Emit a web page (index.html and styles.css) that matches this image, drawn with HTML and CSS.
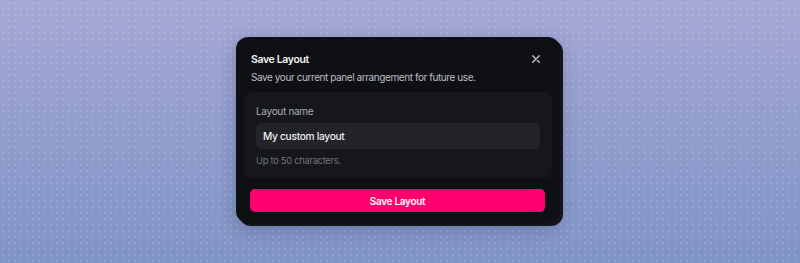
FILE: index.html
```html
<!DOCTYPE html>
<html lang="en">
<head>
    <meta charset="UTF-8">
    <meta name="viewport" content="width=device-width, initial-scale=1.0">
    <title>Save Layout</title>
    <link rel="stylesheet" href="styles.css">
</head>
<body>
    <div class="dialog">
        <div class="dialog-header">
            <h2>Save Layout</h2>
            <button class="close-btn" aria-label="Close">
                <svg width="8" height="8" viewBox="0 0 8 8">
                    <path d="M0.7 0.7 L7.3 7.3 M7.3 0.7 L0.7 7.3" stroke="#c4c5cb" stroke-width="1.3" stroke-linecap="round"/>
                </svg>
            </button>
        </div>
        <p class="subtitle">Save your current panel arrangement for future use.</p>
        <div class="field-card">
            <label for="layoutName">Layout name</label>
            <input type="text" id="layoutName" value="My custom layout">
            <span class="hint">Up to 50 characters.</span>
        </div>
        <button class="save-btn">Save Layout</button>
    </div>
</body>
</html>
```

FILE: styles.css
```css
body {
    margin: 0;
    height: 263px;
    font-family: Inter, "Noto Sans", sans-serif;
    background-color: #939dcd;
    background-image:
        radial-gradient(circle, rgba(255, 255, 255, 0.13) 0.8px, transparent 1.2px),
        linear-gradient(180deg, #a6a7d5 0%, #8f9ccc 55%, #8095c5 100%);
    background-size: 6px 6px, 100% 100%;
    display: flex;
    justify-content: center;
    align-items: flex-start;
    padding-top: 37px;
    box-sizing: border-box;
    overflow: hidden;
}
.dialog {
    width: 324px;
    margin-left: -4px;
    background-color: #0f1013;
    border-radius: 12px;
    box-shadow: 3px 3px 0 #14151b, 0 6px 18px rgba(20, 22, 50, 0.25);
    padding: 13px 0 11px;
    box-sizing: border-box;
    display: flex;
    flex-direction: column;
}
.dialog-header {
    display: flex;
    justify-content: space-between;
    align-items: center;
    padding: 0 15px;
    height: 18px;
}
.dialog-header h2 {
    margin: 0;
    font-size: 10.5px;
    letter-spacing: -0.35px;
    font-weight: 600;
    color: #f2f2f4;
}
.close-btn {
    background: none;
    border: none;
    padding: 0;
    width: 8px;
    height: 8px;
    display: flex;
    margin-right: 5px;
    cursor: pointer;
}
.subtitle {
    margin: 0;
    padding: 0 15px;
    line-height: 18px;
    font-size: 10px;
    letter-spacing: -0.42px;
    color: #bdbec5;
}
.field-card {
    margin: 6px 8px 0;
    background-color: #16171b;
    border-radius: 8px;
    padding: 11px 12px 10px;
    display: flex;
    flex-direction: column;
}
.field-card label {
    font-size: 10px;
    letter-spacing: -0.3px;
    line-height: 16px;
    color: #abacb3;
}
.field-card input[type="text"] {
    margin-top: 4px;
    height: 26px;
    padding: 0 7px;
    border: none;
    border-radius: 6px;
    background-color: #232428;
    color: #eeeef0;
    font-family: inherit;
    font-size: 10.2px;
    letter-spacing: -0.3px;
    font-weight: 500;
    outline: none;
    box-sizing: border-box;
}
.hint {
    margin-top: 5px;
    font-size: 9.4px;
    letter-spacing: -0.3px;
    line-height: 14px;
    color: #73757c;
}
.save-btn {
    margin: 11px 15px 0 14px;
    height: 23px;
    padding-top: 1px;
    border: none;
    border-radius: 5px;
    background-color: #ff006e;
    color: #fff;
    font-family: inherit;
    font-size: 10px;
    letter-spacing: -0.3px;
    font-weight: 600;
    cursor: pointer;
}
```
